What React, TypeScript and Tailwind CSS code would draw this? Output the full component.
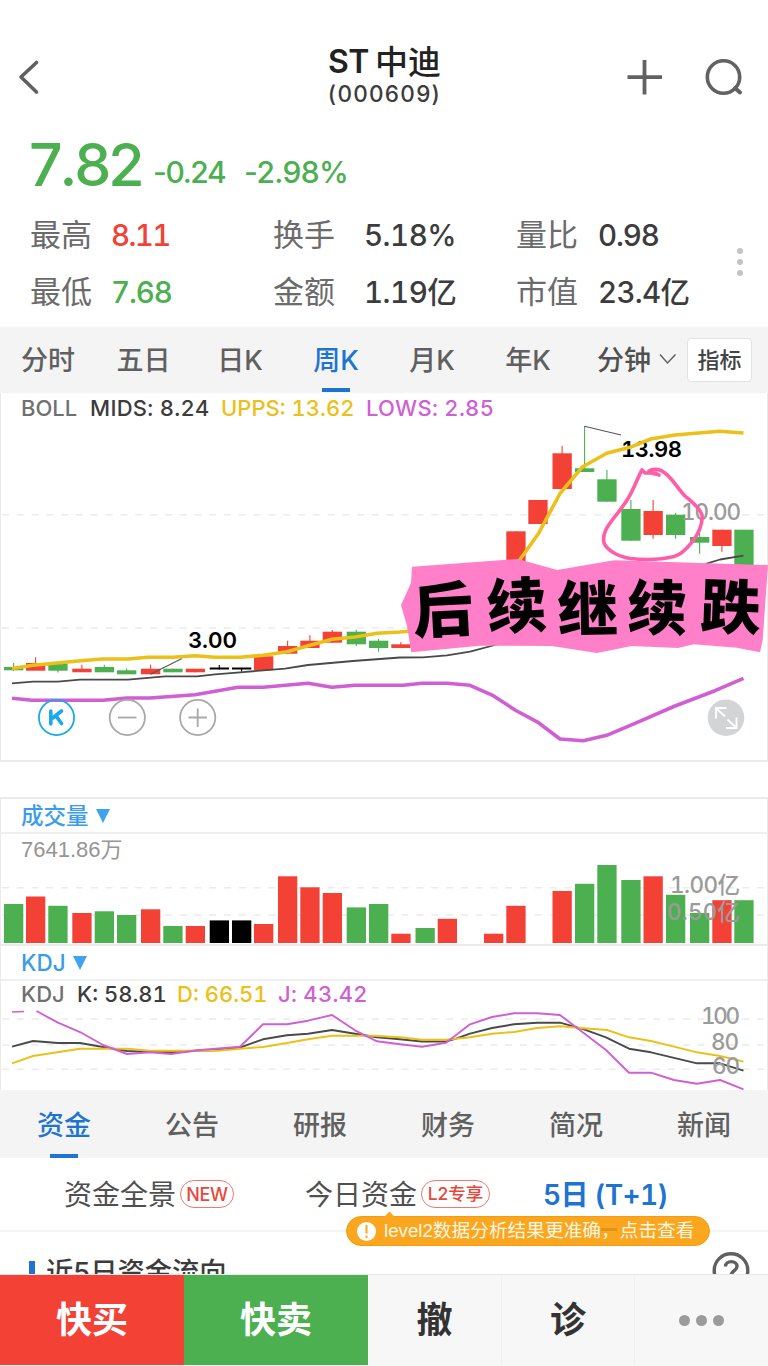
import { ReactNode } from "react";
import clsx from "clsx";

const RED = "#f34235";
const GREEN = "#4caf50";
const BLACK = "#000000";
const YELLOW = "#ebc019";
const MAGENTA = "#cf5fd3";
const DARK = "#4a4a4a";

const BAR_WIDTH = 19.3;

// left edge, colour, body top, body bottom, wick top, wick bottom
type Candle = [number, string, number, number, number, number];

const candles: Candle[] = [
  [4, GREEN, 667, 670.3, 663, 671],
  [26, RED, 663, 670.7, 657.3, 670],
  [48.3, GREEN, 663.7, 670.7, 663, 672.5],
  [72.3, RED, 668.7, 672.3, 664.7, 672],
  [94.7, GREEN, 667, 672.3, 664.7, 672],
  [117, GREEN, 670.3, 674.3, 668.5, 674],
  [141, RED, 668.7, 674.3, 664.7, 674],
  [163.3, GREEN, 668.7, 672.3, 668.7, 672.3],
  [185.7, RED, 668.7, 672.3, 668.7, 672.3],
  [209.7, BLACK, 667.5, 669.5, 665, 669.5],
  [232, BLACK, 667.5, 669.5, 668, 671.5],
  [254, RED, 656.3, 670.3, 656.3, 670.3],
  [278, RED, 646, 653.7, 640.7, 654],
  [300.3, RED, 640.7, 648, 635.3, 648],
  [322.7, RED, 631.7, 642.7, 630, 643],
  [346.7, GREEN, 631.7, 644.3, 629.7, 646],
  [369, GREEN, 640.7, 648, 639, 651.7],
  [391.3, RED, 644.3, 648, 642, 648],
  [437.7, RED, 641, 648, 641, 648],
  [506.3, RED, 531.3, 562, 531.3, 562],
  [528.3, RED, 500, 524, 500, 524],
  [552.5, RED, 453.3, 489, 445.7, 489],
  [575, GREEN, 468.3, 472, 426, 472],
  [597.3, GREEN, 479.3, 501.7, 470, 501.7],
  [621.3, GREEN, 509, 540.7, 500, 540.7],
  [643.5, RED, 511, 535, 500, 538.7],
  [666, GREEN, 514.7, 535, 512.7, 538.7],
  [690, GREEN, 537, 542.7, 530, 553.7],
  [712.3, RED, 529.7, 546, 529.7, 551.7],
  [734.3, GREEN, 529.7, 570, 529.7, 570],
];

// left edge, colour, top
const volumes: [number, string, number][] = [
  [4, GREEN, 904],
  [26, RED, 896.5],
  [48.3, GREEN, 905.8],
  [72.3, RED, 913],
  [94.7, GREEN, 911.3],
  [117, GREEN, 915],
  [141, RED, 909.3],
  [163.3, GREEN, 926],
  [185.7, RED, 926],
  [209.7, BLACK, 920.4],
  [232, BLACK, 920.4],
  [254, RED, 924],
  [278, RED, 876.3],
  [300.3, RED, 887.3],
  [322.7, RED, 893],
  [346.7, GREEN, 907.4],
  [369, GREEN, 904],
  [391.3, RED, 933.7],
  [415.5, GREEN, 928],
  [437.7, RED, 918.8],
  [484, RED, 933.7],
  [506.3, RED, 905.8],
  [552.5, RED, 891],
  [575, GREEN, 883.8],
  [597.3, GREEN, 865],
  [621.3, GREEN, 880],
  [643.5, RED, 876.3],
  [666, GREEN, 894.8],
  [690, GREEN, 913],
  [712.3, RED, 900.2],
  [734.3, GREEN, 900.2],
];

const upperBand =
  "12,668.5 33,665.3 57,663 78,661 102,659 128,659 148,657.3 173,657.3 195,655.7 215,657.3 240,657.3 263,655.3 287,651.7 310,645.3 332,639.3 355,637 377,633.3 400,632 410,631 440,630 480,615 520,559.5 538.5,533.5 560,493.5 582.7,466.7 606.7,453.3 630,447.3 650.7,439 675,435 719.5,431.3 743.5,433";
const middleBand =
  "12,683.3 33,681.7 58,681.7 80,679.7 128,679.7 165,676.3 197,676.3 215,674.3 240,672.3 285,668.7 308,665 353,661 400,657.5 423,657.3 447,655.3 470,651.7 495,645 600,610 706.7,563.7 720,559.5 743.5,555.7";
const lowerBand =
  "12,698.3 32,700.3 103,700.3 127,698 150,698 195,694.7 238,687.3 263,687.3 308,683.3 332,687.3 355,685.3 403,685.3 422,683.3 447,683.3 470,685.3 493.3,695.7 515,710 538.5,722.7 560,739 583.3,740.7 606.7,735.3 635,723.3 675,706 715,690.7 743.5,678.3";

const kLine =
  "12,1046.7 33,1041 58,1043 80,1043 103,1047 127,1051 150,1051.7 171,1052.3 197,1050.7 217,1050 240,1047.7 263,1039.3 287,1035.3 308,1033.7 332,1030 355,1033.7 377,1037.3 400,1039.3 422,1041.5 446,1041.5 456,1038.7 470,1033.7 492,1028 514,1024.3 537,1022.7 560,1022.7 584,1029.3 606,1037.3 629,1048.7 651,1052.3 697,1063.3 720,1063.3 743.5,1070.7";
const dLine =
  "12,1063.3 33,1056 80,1048.7 127,1048.7 150,1050.7 217,1050.7 240,1048.7 263,1047 287,1043 308,1039.3 332,1035.7 373,1035.7 400,1037.3 422,1039.7 446,1039.7 470,1037.3 492,1033.7 514,1032 537,1028 560,1026.3 584,1028.3 607,1030 629,1037.3 651,1041 674,1046.7 697,1052.3 720,1056 743.5,1061.7";
const jLine =
  "36.5,1011 58,1022.7 80,1032 103,1045 127,1054 150,1052.3 171,1054 197,1050.3 240,1046.7 263,1024.3 287,1024.3 308,1020.7 332,1015 355,1030.3 377,1041.3 400,1044.3 422,1046.7 446,1042.7 470,1024.3 492,1017 514,1013.3 537,1013.3 560,1015 584,1033.3 606,1050 629,1072.7 651,1072.7 674,1080 697,1083.7 720,1080 743.5,1089.3";

function Line({ points, color, width }: { points: string; color: string; width: number }) {
  return <polyline points={points} fill="none" stroke={color} strokeWidth={width} strokeLinejoin="round" />;
}

function GridLine({ y }: { y: number }) {
  return <path d={`M2 ${y}H766`} stroke="#ececec" strokeWidth="1.6" strokeDasharray="7 7.8" />;
}

function AxisLabel({ x, y, width, children }: { x: number; y: number; width: number; children: ReactNode }) {
  return (
    <text x={x} y={y} textLength={width} fontSize="22.5" fontWeight="500" fill="#9b9b9b" className="tabular-nums">
      {children}
    </text>
  );
}

function Header() {
  return (
    <header className="flex h-[128px] items-start justify-between pl-[18px] pr-[25px]">
      <svg className="mt-[58px] h-[38px] w-[124px]" viewBox="0 0 124 38" fill="none" stroke="#606060" strokeWidth="3.6" strokeLinecap="round" strokeLinejoin="round">
        <path d="M18.5 4.5L3 19L18.5 34" />
      </svg>
      <div className="flex flex-col items-center pt-[43px]">
        <h1 className="flex h-[38px] items-center gap-[6px] text-[32px] font-semibold text-[#222]">
          <span className="tracking-[-0.5px]">ST</span>
          <span className="pt-[2px] text-[33px] font-medium">中迪</span>
        </h1>
        <div className="flex h-[26px] items-center text-[22.5px] font-medium tracking-[1.3px] text-[#3c3c3c]">(000609)</div>
      </div>
      <svg className="mt-[58px] h-[40px] w-[116px]" viewBox="627 58 116 40" fill="none" stroke="#626262">
        <path d="M644.5 60V94.500M627.500 77.200H662" strokeWidth="3.8" />
        <circle cx="723.500" cy="77" r="16.200" strokeWidth="3.600" />
        <path d="M735 88L740 92.500" strokeWidth="4" strokeLinecap="round" />
      </svg>
    </header>
  );
}

function Stat({ label, value, color = "text-[#3c3c3c]" }: { label: string; value: string; color?: string }) {
  return (
    <>
      <span className="text-[31px] text-[#6b6b6b]">{label}</span>
      <span className={clsx("text-[29.5px] font-medium tabular-nums [font-kerning:none]", color)}>{value}</span>
    </>
  );
}

function Quote() {
  return (
    <section className="relative h-[199px] pl-[29px] pt-[4px]">
      <div className="flex h-[66px] items-baseline whitespace-nowrap text-[#4caf50]">
        <span className="w-[124px] text-[59px] font-medium leading-[66px] tracking-[-3.2px] [font-kerning:none]">7.82</span>
        <span className="w-[91px] -translate-y-[3px] text-[30px] font-medium tracking-[-1.4px]">-0.24</span>
        <span className="-translate-y-[3px] text-[30px] font-medium tracking-[-0.6px]">-2.98%</span>
      </div>
      <div className="mt-[9px] grid grid-cols-[81px_162px_91px_152px_82px_140px] auto-rows-[57px] items-center whitespace-nowrap pl-px">
        <Stat label="最高" value="8.11" color="text-[#f34235] tracking-[-1.6px]" />
        <Stat label="换手" value="5.18%" color="text-[#3c3c3c] tracking-[-0.5px]" />
        <Stat label="量比" value="0.98" color="text-[#3c3c3c] tracking-[-1.1px]" />
        <Stat label="最低" value="7.68" color="text-[#4caf50] tracking-[-1.1px]" />
        <Stat label="金额" value="1.19亿" color="text-[#3c3c3c] tracking-[-0.5px]" />
        <Stat label="市值" value="23.4亿" color="text-[#3c3c3c] tracking-[-0.7px]" />
      </div>
      <div className="absolute left-[737px] top-[120px] flex flex-col gap-[5px]">
        <i className="size-[6px] rounded-full bg-[#c4c4c4]" />
        <i className="size-[6px] rounded-full bg-[#c4c4c4]" />
        <i className="size-[6px] rounded-full bg-[#c4c4c4]" />
      </div>
    </section>
  );
}

const periods = ["分时", "五日", "日K", "周K", "月K", "年K"];

function PeriodTabs() {
  return (
    <nav className="flex h-[66px] items-center bg-[#f4f4f4] text-[27px] text-[#606060]">
      <div className="grid h-full grid-cols-[96px_95px_98px_94px_98px_94px] justify-items-center">
        {periods.map((name) => (
          <button key={name} className={clsx("relative h-full whitespace-nowrap pt-[2px] font-medium", name === "周K" && "text-[#1e74cf]")}>
            {name}
            {name === "周K" && <i className="absolute bottom-[1px] left-1/2 h-[4px] w-[28px] -translate-x-1/2 bg-[#1e74cf]" />}
          </button>
        ))}
      </div>
      <button className="ml-[22px] flex items-center gap-[8px] font-medium text-[#505050]">
        <span className="pt-[2px]">分钟</span>
        <svg className="h-[12px] w-[18px]" viewBox="0 0 18 12" fill="none" stroke="#606060" strokeWidth="1.5">
          <path d="M1 0.500L8.500 9L16.500 0.500" />
        </svg>
      </button>
      <button className="ml-[10px] h-[44px] w-[65px] rounded-[4px] border border-[#e2e2e2] bg-white text-[22px] font-medium text-[#444]">指标</button>
    </nav>
  );
}

function Sticker() {
  return (
    <g>
      <polygon
        points="412,566.700 517.700,559 557.300,570 614,560.300 700,563 768,565 762.700,640 760,652.300 736.700,647.700 694,644.300 678,648 631.700,646 597,653 551.700,646 480,645.700 411.300,652.300 407,626 401,605 411,583"
        fill="#ff80c8"
      />
      <g fontSize="60" fontWeight="800" textAnchor="middle">
        <text transform="translate(444 632) rotate(-3)">后</text>
        <text transform="translate(518 628) rotate(-3)">续</text>
        <text transform="translate(588 631) rotate(-1)">继</text>
        <text transform="translate(657 630) rotate(1)">续</text>
        <text transform="translate(730 629) rotate(2)">跌</text>
      </g>
    </g>
  );
}

function PriceChart() {
  return (
    <section className="h-[369px] border-x border-b-2 border-[#ebebeb]">
      <div className="flex h-[30px] items-center whitespace-nowrap pl-[20px] text-[22px] font-medium tabular-nums">
        <span className="w-[69px] text-[#707070]">BOLL</span>
        <span className="w-[131px] tracking-[0.3px] text-[#3c3c3c]">MIDS: 8.24</span>
        <span className="w-[145px] text-[#ebc019]">UPPS: 13.62</span>
        <span className="tracking-[0.3px] text-[#cf5fd3]">LOWS: 2.85</span>
      </div>
      <svg className="-ml-px h-[337px] w-[768px] max-w-none" viewBox="0 423 768 337" overflow="visible">
        <GridLine y={514.7} />
        <GridLine y={628} />
        {candles.map(([x, color, top, bottom, high, low]) => (
          <g key={x}>
            <path d={`M${x + 9.6} ${high}V${low}`} stroke={color} strokeWidth="1.1" />
            <rect x={x} y={top} width={BAR_WIDTH} height={bottom - top} fill={color} />
          </g>
        ))}
        <path d="M584.500 426.300L621 435M150.500 674.300L182 658.500" stroke="#555" strokeWidth="1.100" fill="none" />
        <AxisLabel x={681} y={520} width={60}>10.00</AxisLabel>
        <text x="621" y="457" textLength="61" fontSize="22" fontWeight="600" className="tabular-nums">13.98</text>
        <text x="188" y="648" textLength="49" fontSize="22" fontWeight="600">3.00</text>
        <Line points={middleBand} color={DARK} width={1.8} />
        <Line points={lowerBand} color={MAGENTA} width={3.6} />
        <Line points={upperBand} color={YELLOW} width={3.6} />
        <path
          d="M642 470C638 477 636 483 633 489C628 501 621 509 613 519C607 527 602 534 604 543C607 550 617 556 630 558.500C645 560 660 560 674 556.500C683 554 688 547 692 542C698 535 703 524 702 515C700 508 692 502 685 496C677 488 670 474 661 470.500C657 469 652 469 649 471C652 475 656 473 659 475M642 470L645 473L656 473"
          fill="none"
          stroke="#ff5da8"
          strokeWidth="3.600"
          strokeLinecap="round"
          strokeLinejoin="round"
        />
        <Sticker />
        <g fill="none" stroke="#a9a9a9" strokeWidth="1.800">
          <circle cx="56.500" cy="717.500" r="17.600" stroke="#1ba9ea" />
          <path d="M50.800 711V724M61.500 711L52 718.500L56 716L61.500 723.500" stroke="#1ba9ea" strokeWidth="3.600" strokeLinecap="round" />
          <circle cx="127.300" cy="717.500" r="17.600" />
          <path d="M118 717.500H136.500" />
          <circle cx="197.700" cy="717.500" r="17.600" />
          <path d="M188.500 717.500H207M197.700 708.500V727" />
        </g>
        <circle cx="726" cy="717.700" r="18.300" fill="#a8aaac" fillOpacity="0.500" />
        <path d="M716 718.500V708H726.500M716.500 708.500L725 716.500M736.500 717.500V728H726M736 727.500L727.500 719.500" fill="none" stroke="#fff" strokeWidth="1.800" />
      </svg>
    </section>
  );
}

function IndicatorTitle({ children }: { children: ReactNode }) {
  return (
    <button className="flex h-[35px] w-full items-center gap-[7px] border-b-2 border-[#efefef] pl-[20px] text-[22.5px] font-medium text-[#3b9cea]">
      {children}
      <svg className="h-[14px] w-[14px]" viewBox="0 0 14 14">
        <path d="M0 0H14L7 14Z" fill="#3fa3f0" />
      </svg>
    </button>
  );
}

function VolumeChart() {
  return (
    <section className="mt-[35px] h-[147px] border-x border-t-2 border-[#ebebeb]">
      <IndicatorTitle>成交量</IndicatorTitle>
      <div className="flex h-[30px] items-center pl-[20px] font-['Liberation_Sans','Noto_Sans_CJK_SC',sans-serif] text-[22px] text-[#959595]">7641.86万</div>
      <svg className="-ml-px h-[80px] w-[768px] max-w-none" viewBox="0 864 768 80">
        <GridLine y={887.7} />
        <GridLine y={915} />
        {volumes.map(([x, color, top]) => (
          <rect key={x} x={x} y={top} width={BAR_WIDTH} height={943 - top} fill={color} />
        ))}
        <AxisLabel x={670} y={892.5} width={70}>1.00亿</AxisLabel>
        <AxisLabel x={667} y={920} width={73}>0.50亿</AxisLabel>
      </svg>
    </section>
  );
}

function KdjChart() {
  return (
    <section className="h-[146px] border-x border-t-2 border-[#ebebeb]">
      <IndicatorTitle>KDJ</IndicatorTitle>
      <div className="flex h-[26px] items-center whitespace-nowrap pl-[20px] text-[22px] font-medium tabular-nums">
        <span className="w-[56px] text-[#707070]">KDJ</span>
        <span className="w-[100px] text-[#3c3c3c]">K: 58.81</span>
        <span className="w-[101px] text-[#ebc019]">D: 66.51</span>
        <span className="tracking-[0.3px] text-[#cf5fd3]">J: 43.42</span>
      </div>
      <svg className="-ml-px h-[83px] w-[768px] max-w-none" viewBox="0 1007 768 83">
        <GridLine y={1019} />
        <GridLine y={1045} />
        <GridLine y={1069.3} />
        <Line points={kLine} color={DARK} width={1.9} />
        <Line points={dLine} color={YELLOW} width={1.9} />
        <Line points="12,1012 24,1011.500" color={MAGENTA} width={1.6} />
        <Line points={jLine} color={MAGENTA} width={1.9} />
        <AxisLabel x={701} y={1024} width={39}>100</AxisLabel>
        <AxisLabel x={711} y={1050} width={28}>80</AxisLabel>
        <AxisLabel x={712} y={1074} width={28}>60</AxisLabel>
      </svg>
    </section>
  );
}

const infoTabs = ["资金", "公告", "研报", "财务", "简况", "新闻"];

function InfoTabs() {
  return (
    <nav className="grid h-[68px] grid-cols-6 bg-[#f4f4f4] text-[27px] font-medium text-[#606060]">
      {infoTabs.map((name, i) => (
        <button key={name} className={clsx("relative pt-[5px]", i === 0 && "text-[#1e74cf]")}>
          {name}
          {i === 0 && <i className="absolute bottom-0 left-1/2 h-[4px] w-[28px] -translate-x-1/2 bg-[#1e74cf]" />}
        </button>
      ))}
    </nav>
  );
}

function Funds() {
  return (
    <section className="relative h-[116px] overflow-hidden">
      <div className="flex h-[74px] items-center whitespace-nowrap border-b-2 border-[#f4f4f4] pl-[64px] text-[28px] text-[#505050]">
        <span className="pt-[2px]">资金全景</span>
        <span className="ml-[4px] flex h-[28px] w-[54px] items-center justify-center rounded-full border border-[#ec7a72] text-[18px] font-medium tracking-[-0.4px] text-[#e6483d]">NEW</span>
        <span className="ml-[71px] pt-[2px]">今日资金</span>
        <span className="ml-[4px] flex h-[28px] w-[69px] items-center justify-center rounded-full border border-[#ec7a72] pt-px text-[17.5px] font-medium text-[#e6483d]">L2专享</span>
        <span className="ml-[53px] pt-[2px] font-semibold tabular-nums tracking-[-0.7px] text-[#1e74cf]">5日 (T+1)</span>
      </div>
      <div className="flex items-start pl-[29px] pr-[18px]">
        <i className="mt-[29px] h-[30px] w-[6px] bg-[#1e74cf]" />
        <span className="ml-[11px] mt-[21px] text-[27.3px] font-medium text-[#3c3c3c]">近5日资金流向</span>
        <svg className="ml-auto mt-[19px] size-[38px]" viewBox="0 0 38 38" fill="none" stroke="#606060" strokeWidth="3.400">
          <circle cx="19" cy="19.500" r="16.800" />
          <path d="M13.500 15.500C13.500 9 25 9 25 15.500C25 20 19 19.500 19 25" />
        </svg>
      </div>
      <div className="absolute left-[346px] top-[58px] flex h-[30px] w-[364px] items-center whitespace-nowrap rounded-full border border-[#f69a12] bg-[#fba61f] pl-[10px] text-[#fff6e2]">
        <i className="absolute -top-[4px] left-[39px] size-[7px] rotate-45 bg-[#fba61f]" />
        <svg className="mr-[8px] size-[19px]" viewBox="0 0 19 19">
          <circle cx="9.500" cy="9.500" r="9.500" fill="#fff" />
          <path d="M9.500 3V11.500M9.500 13.500V16" stroke="#fba61f" strokeWidth="2" />
        </svg>
        <i className="absolute left-[254px] top-[11px] h-[3px] w-[16px] bg-[#e0921a]" />
        <span className="relative font-['Liberation_Sans','Noto_Sans_CJK_SC',sans-serif] text-[18.7px]">level2数据分析结果更准确，点击查看</span>
      </div>
    </section>
  );
}

function TradeBar() {
  return (
    <footer className="grid h-[92px] grid-cols-[184px_184px_134px_133px_133px] border-t border-[#e9e9e9] bg-[#f7f7f7] pb-px text-[36px] font-semibold">
      <button className="bg-[#f34235] text-white">快买</button>
      <button className="bg-[#4caf50] text-white">快卖</button>
      <button className="border-r border-[#efefef] text-[#333]">撤</button>
      <button className="border-r border-[#efefef] text-[#333]">诊</button>
      <button className="flex items-center justify-center gap-[6px]">
        <i className="size-[11px] rounded-full bg-[#9b9b9b]" />
        <i className="size-[11px] rounded-full bg-[#9b9b9b]" />
        <i className="size-[11px] rounded-full bg-[#9b9b9b]" />
      </button>
    </footer>
  );
}

export default function App() {
  return (
    <main className="h-[1366px] w-[768px] overflow-hidden bg-white font-['Inter','Noto_Sans_CJK_SC',sans-serif]">
      <Header />
      <Quote />
      <PeriodTabs />
      <PriceChart />
      <VolumeChart />
      <KdjChart />
      <InfoTabs />
      <Funds />
      <TradeBar />
    </main>
  );
}
